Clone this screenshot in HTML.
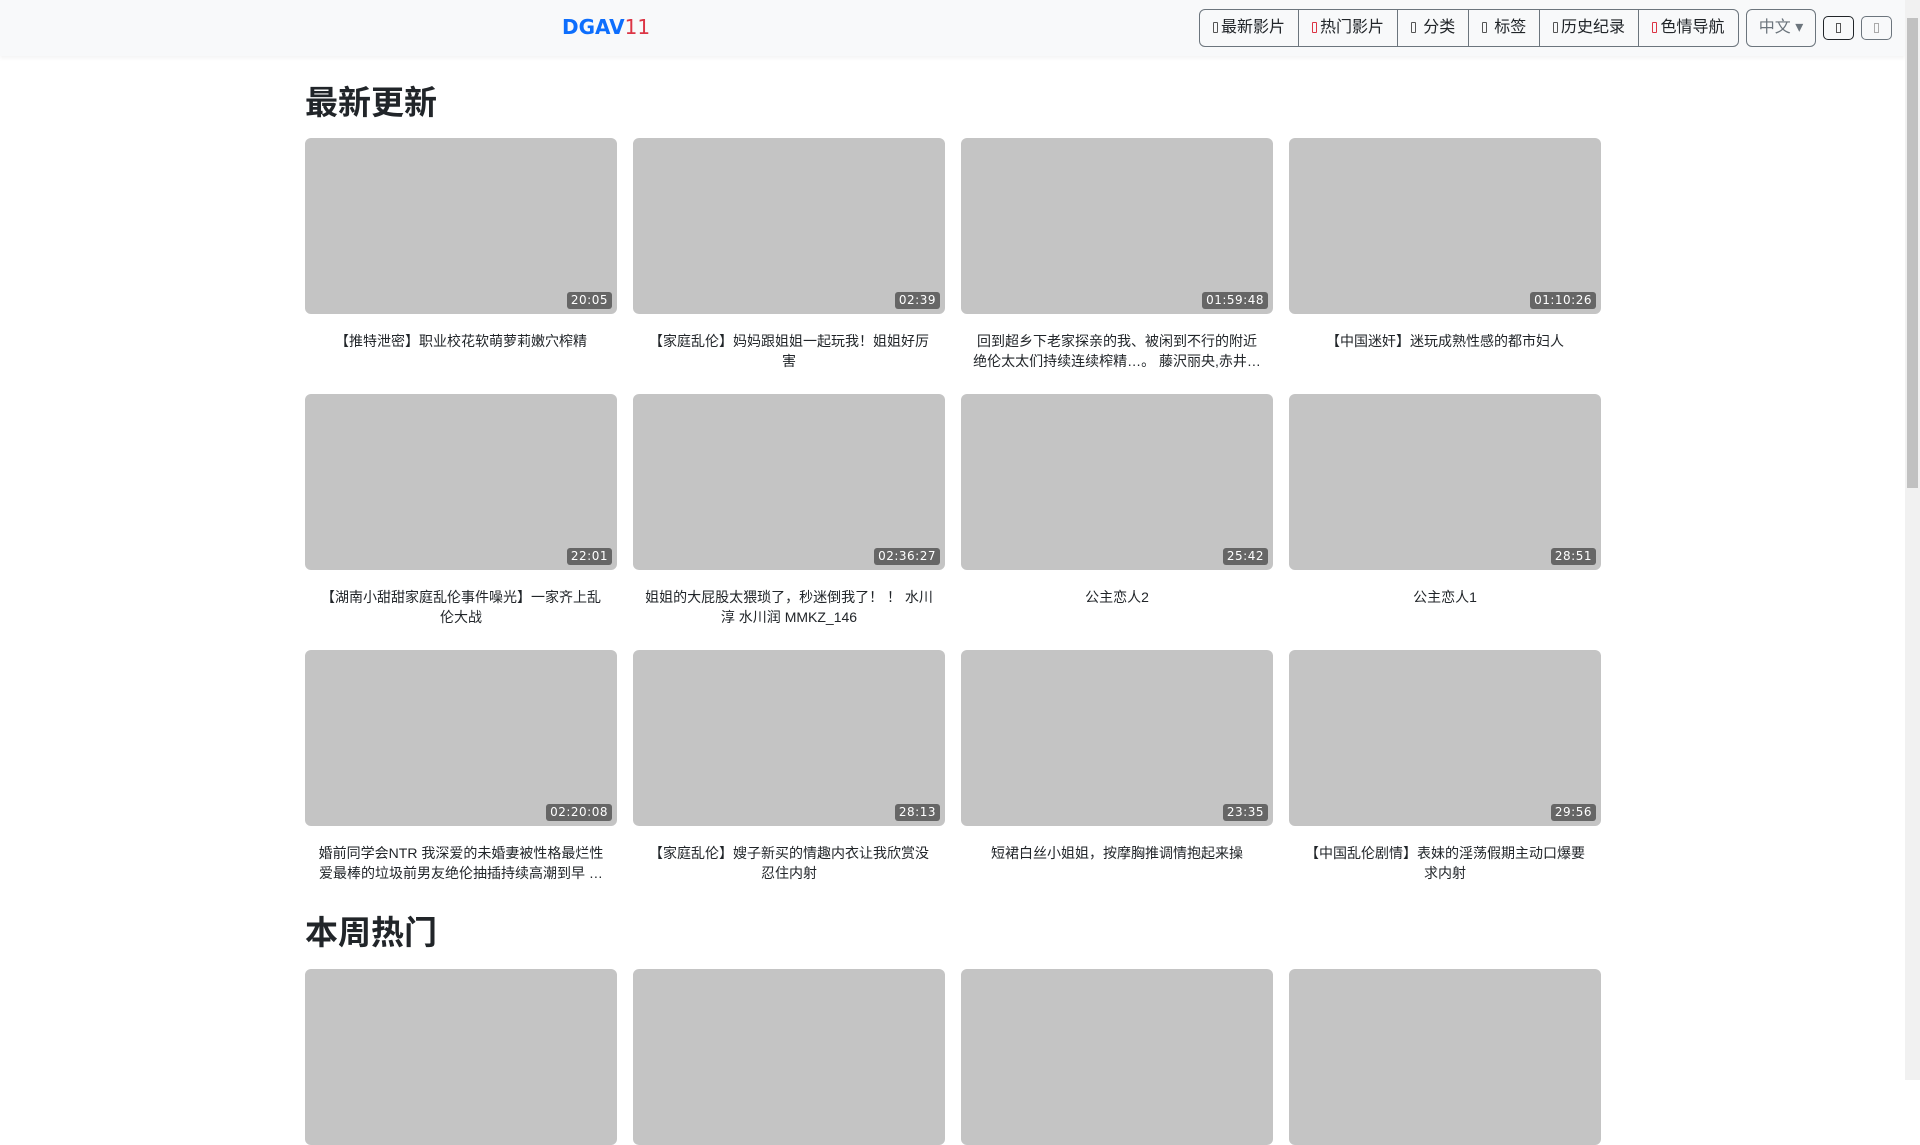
<!DOCTYPE html>
<html><head><meta charset="utf-8"><style>
*{box-sizing:border-box;margin:0;padding:0}
body{width:1920px;height:1080px;overflow:hidden;background:#fff;font-family:"Liberation Sans","Noto Sans CJK SC",sans-serif;color:#212529;position:relative}
.nav{position:absolute;left:0;top:0;width:1905px;height:56px;background:#f8f9fa;box-shadow:0 2px 4px rgba(0,0,0,.05)}
.brand{position:absolute;left:562px;top:15px;font-size:20px;font-weight:bold;color:#0d6efd;font-family:"DejaVu Sans",sans-serif}
.brand span{color:#dc3545;font-weight:normal}
.grp{position:absolute;left:1199px;top:9px;height:38px;display:flex;border:1px solid #6c757d;border-radius:6px;overflow:hidden}
.grp div{height:36px;line-height:36px;font-size:16px;color:#212529;text-align:center;border-right:1px solid #6c757d}
.grp div:last-child{border-right:none}
.ic{display:inline-block;width:5px;height:11px;border:1px solid #555;border-radius:1px;margin-right:3px;vertical-align:-1px}
.ic.r{border-color:#dc3545}
.lang{position:absolute;left:1746px;top:9px;width:70px;height:38px;border:1px solid #6c757d;border-radius:6px;color:#6c757d;font-size:16px;line-height:36px;text-align:center}
.sb{position:absolute;top:16px;width:31px;height:24px;border:1px solid #212529;border-radius:5px}
.sb i{position:absolute;left:12px;top:6px;width:5px;height:10px;border:1px solid #555}
.scroll{position:absolute;right:0;top:0;width:15px;height:1080px;background:#f1f1f1}
.scroll div{position:absolute;left:2px;top:18px;width:11px;height:470px;background:#c1c1c1}
h2{position:absolute;left:305px;font-size:33px;font-weight:bold;line-height:40px}
.card{position:absolute;width:312px}
.th{height:176px;background:#c4c4c4;border-radius:6px;position:relative}
.d{position:absolute;right:5px;bottom:5px;background:#666;color:#fff;font-family:"DejaVu Sans",sans-serif;font-size:12px;line-height:17px;padding:0 4px;border-radius:3px;letter-spacing:.5px}
.t{width:290px;margin:17px auto 0;text-align:center;font-size:14px;line-height:20px;max-height:40px;overflow:hidden}
</style></head><body>
<div class="nav">
<div class="brand">DGAV<span>11</span></div>
<div class="grp">
<div style="width:99px"><i class="ic"></i>最新影片</div>
<div style="width:99px"><i class="ic r"></i>热门影片</div>
<div style="width:71px"><i class="ic"></i> 分类</div>
<div style="width:71px"><i class="ic"></i> 标签</div>
<div style="width:99px"><i class="ic"></i>历史纪录</div>
<div style="width:99px"><i class="ic r"></i>色情导航</div>
</div>
<div class="lang">中文 ▾</div>
<div class="sb" style="left:1823px"><i></i></div>
<div class="sb" style="left:1861px;border-color:#6c757d"><i style="border-color:#aaa"></i></div>
</div>
<div class="scroll"><div></div></div>
<h2 style="top:83px">最新更新</h2>
<h2 style="top:913px">本周热门</h2>

<div class="card" style="left:305px;top:138px"><div class="th"><span class="d">20:05</span></div><div class="t">【推特泄密】职业校花软萌萝莉嫩穴榨精</div></div>
<div class="card" style="left:633px;top:138px"><div class="th"><span class="d">02:39</span></div><div class="t">【家庭乱伦】妈妈跟姐姐一起玩我！姐姐好厉害</div></div>
<div class="card" style="left:961px;top:138px"><div class="th"><span class="d">01:59:48</span></div><div class="t">回到超乡下老家探亲的我、被闲到不行的附近绝伦太太们持续连续榨精…。 藤沢丽央,赤井…</div></div>
<div class="card" style="left:1289px;top:138px"><div class="th"><span class="d">01:10:26</span></div><div class="t">【中国迷奸】迷玩成熟性感的都市妇人</div></div>

<div class="card" style="left:305px;top:394px"><div class="th"><span class="d">22:01</span></div><div class="t">【湖南小甜甜家庭乱伦事件噪光】一家齐上乱伦大战</div></div>
<div class="card" style="left:633px;top:394px"><div class="th"><span class="d">02:36:27</span></div><div class="t">姐姐的大屁股太猥琐了，秒迷倒我了！ ！ 水川淳 水川润 MMKZ_146</div></div>
<div class="card" style="left:961px;top:394px"><div class="th"><span class="d">25:42</span></div><div class="t">公主恋人2</div></div>
<div class="card" style="left:1289px;top:394px"><div class="th"><span class="d">28:51</span></div><div class="t">公主恋人1</div></div>

<div class="card" style="left:305px;top:650px"><div class="th"><span class="d">02:20:08</span></div><div class="t">婚前同学会NTR 我深爱的未婚妻被性格最烂性爱最棒的垃圾前男友绝伦抽插持续高潮到早 …</div></div>
<div class="card" style="left:633px;top:650px"><div class="th"><span class="d">28:13</span></div><div class="t">【家庭乱伦】嫂子新买的情趣内衣让我欣赏没忍住内射</div></div>
<div class="card" style="left:961px;top:650px"><div class="th"><span class="d">23:35</span></div><div class="t">短裙白丝小姐姐，按摩胸推调情抱起来操</div></div>
<div class="card" style="left:1289px;top:650px"><div class="th"><span class="d">29:56</span></div><div class="t">【中国乱伦剧情】表妹的淫荡假期主动口爆要求内射</div></div>

<div class="card" style="left:305px;top:969px"><div class="th"></div></div>
<div class="card" style="left:633px;top:969px"><div class="th"></div></div>
<div class="card" style="left:961px;top:969px"><div class="th"></div></div>
<div class="card" style="left:1289px;top:969px"><div class="th"></div></div>
</body></html>
